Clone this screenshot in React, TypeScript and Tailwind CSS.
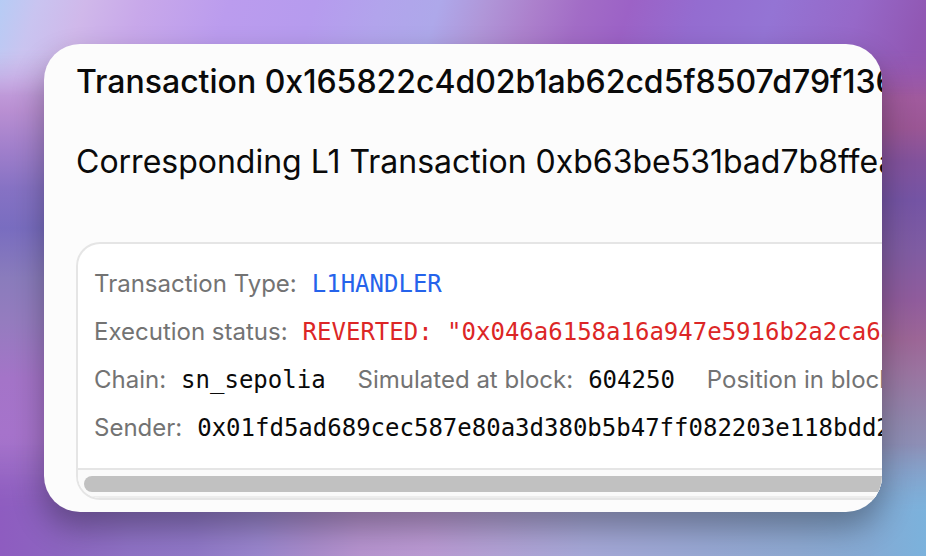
import type { ReactNode } from "react";

// Wallpaper: the two halves carry the side colours, the pseudo-elements blend in the top and bottom bands.
const wallpaper = [
  "relative isolate bg-no-repeat bg-[position:left,right] bg-[size:50%_100%]",
  "bg-[image:linear-gradient(180deg,#b6ccf5_0%,#ccb8e6_8%,#c6a4e0_14%,#b98fd2_20%,#a07fcb_27%,#8672c4_34%,#796dc0_41%,#8a7cbc_50%,#957cbf_58%,#a474c8_68%,#a673cb_78%,#a070c9_85%,#8d5cbd_94%,#8556bb_100%),linear-gradient(180deg,#955cbc_0%,#9858ae_11%,#a05a9c_18%,#9a5694_23%,#82529c_29%,#7454a4_36%,#7f5ca2_45%,#905c9c_54%,#9c6696_61%,#9a74a0_67%,#9088ae_76%,#8a97bf_85%,#82a6d0_94%,#7bb0da_100%)]",
  "before:absolute before:inset-x-0 before:top-0 before:-z-10 before:h-24 before:mask-b-from-50%",
  "before:bg-[linear-gradient(108deg,#b6ccf5_0%,#c9c4f0_4%,#d0b8ea_9%,#c8a8ea_15%,#bb9cee_24%,#b69bee_33%,#b2a4ec_40%,#aea8ea_46%,#b096d8_51%,#ac80cc_56%,#a26cc6_61%,#9c62c6_66%,#946cd0_73%,#9474d4_81%,#9668c8_90%,#9158b4_97%,#9156ae_100%)]",
  "after:absolute after:inset-x-0 after:bottom-0 after:-z-10 after:h-28 after:mask-t-from-40%",
  "after:bg-[linear-gradient(90deg,#8e5cc0_0%,#8c64c0_6%,#8f72c6_14%,#9078c8_21%,#9a86ce_28%,#aa8ccc_34%,#b794d0_39%,#bb9ad4_46%,#b2a2d6_54%,#a6a8d8_63%,#98a8d4_76%,#8ea9d2_86%,#84aad4_94%,#7bb2dc_100%)]",
].join(" ");

function Field({ label, tone = "text-neutral-950", children }: { label: string; tone?: string; children: ReactNode }) {
  return (
    <div className="flex gap-[15px]">
      <dt className="text-[#737373]">{label}</dt>
      <dd className={`font-['DejaVu_Sans_Mono',monospace] ${tone}`}>{children}</dd>
    </div>
  );
}

export default function App() {
  return (
    <div className={`min-h-screen p-11 font-['Inter',sans-serif] text-neutral-950 ${wallpaper}`}>
      <main className="overflow-hidden rounded-[36px] bg-[#fcfcfc] pt-5 pb-3 pl-8 whitespace-nowrap shadow-[0_16px_32px_rgba(0,0,0,0.32)]">
        <h1 className="text-[32px] leading-9 font-medium">Transaction 0x165822c4d02b1ab62cd5f8507d79f136</h1>
        <h2 className="mt-11 text-[32px] leading-9">Corresponding L1 Transaction 0xb63be531bad7b8ffea</h2>
        <section className="mt-[62px] overflow-hidden rounded-l-3xl border-2 border-r-0 border-[#e5e5e5] bg-white">
          <dl className="flex flex-col gap-4 px-4 py-6 text-2xl leading-8">
            <Field label="Transaction Type:" tone="text-[#2563eb]">L1HANDLER</Field>
            <Field label="Execution status:" tone="text-[#dc2626]">REVERTED: "0x046a6158a16a947e5916b2a2ca6a</Field>
            <div className="flex gap-8">
              <Field label="Chain:">sn_sepolia</Field>
              <Field label="Simulated at block:">604250</Field>
              <Field label="Position in block:">1</Field>
            </div>
            <Field label="Sender:">0x01fd5ad689cec587e80a3d380b5b47ff082203e118bdd2</Field>
          </dl>
          <div className="border-y-2 border-t-[#e5e5e5] border-b-[#ededed] bg-[#fafafa] pt-1.5 pb-1 pl-1.5">
            <div className="h-4 rounded-l-full bg-[#c1c1c1]" />
          </div>
        </section>
      </main>
    </div>
  );
}
